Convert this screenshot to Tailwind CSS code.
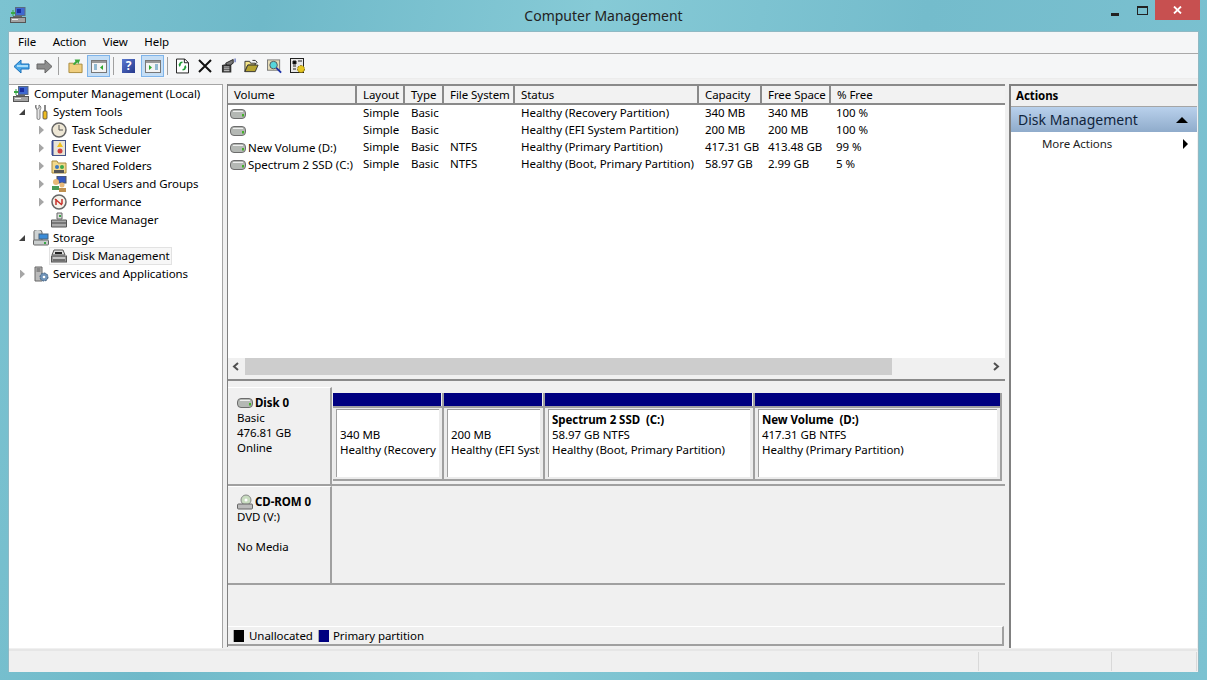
<!DOCTYPE html>
<html lang="en">
<head>
<meta charset="UTF-8" />
<title>Computer Management</title>
<script src="https://cdn.jsdelivr.net/npm/@tailwindcss/browser@4"></script>
</head>
<body class="w-[1207px] h-[680px] overflow-hidden flex flex-col bg-[linear-gradient(100deg,#7cc3d1_0%,#6fb9c9_20%,#86cad6_45%,#74bccc_70%,#7cc2d1_100%)] font-['Noto_Sans',sans-serif] text-[11.5px] tracking-[-0.06px] whitespace-nowrap text-black">

<svg class="hidden">
  <symbol id="pc" viewBox="0 0 16 16">
    <rect x="5.500" y=".5" width="9.500" height="8" fill="#3f68d0" stroke="#5a6a80"/><rect x="7" y="2" width="4" height="4" fill="#1a2fa0"/>
    <path d="M1 5h4v2H1z" fill="#39a845"/><path d="M3 3v6" stroke="#39a845"/><rect x=".5" y="10.500" width="15" height="5" fill="#a3a3a3" stroke="#555"/><path d="M3 9.500h9" stroke="#666"/><path d="M2 12.500h6" stroke="#eee"/>
  </symbol>
  <symbol id="hdd" viewBox="0 0 16 10">
    <rect x=".5" y=".5" width="15" height="9" rx="3.500" fill="#b4b8b4" stroke="#6c6c6c"/><path d="M3 2.500h10" stroke="#eee"/><rect x="12" y="5" width="2" height="2.500" fill="#44b029"/>
  </symbol>
  <symbol id="diskmgr" viewBox="0 0 16 16">
    <path d="M3 2h9l2 5H1z" fill="#ddd" stroke="#555"/><rect x="4" y="4" width="7" height="2" fill="#222"/><rect x=".5" y="8" width="15" height="6" fill="#9a9a9a" stroke="#555"/><path d="M2 10h12" stroke="#eee"/><path d="M2 12h12" stroke="#444"/>
  </symbol>
</svg>

<!-- title bar -->
<header class="h-[31px] shrink-0 flex">
  <div class="w-[96px]"><svg class="w-4 h-4 ml-[10px] mt-[7px]"><use href="#pc"/></svg></div>
  <div class="flex-1 text-center text-[14px] tracking-normal leading-[31px] text-[#222]">Computer Management</div>
  <div class="w-[96px] flex items-start">
    <div class="w-[8px] h-[3px] mt-[13px] bg-[#222]"></div>
    <div class="w-[11px] h-[9px] ml-[18px] mt-[6px] border border-t-2 border-[#222]"></div>
    <div class="w-[45px] h-[20px] ml-[7px] bg-[#c75050] flex items-center justify-center">
      <svg width="9" height="8" viewBox="0 0 9 8"><path d="M1 .5l7 7M8 .5l-7 7" stroke="#fff" stroke-width="1.800"/></svg>
    </div>
  </div>
</header>

<!-- window -->
<div class="mx-[8px] mb-[8px] flex-1 flex flex-col bg-[#f0f0f0] border-t border-r border-l border-[#8fb9c4] w-[1191px] min-h-0">
  <nav class="h-[22px] bg-[#f5f6f7] flex items-center pl-[9px] pb-[2px] gap-[16.5px] border-b border-[#a9a9a9]">
    <span>File</span><span>Action</span><span>View</span><span>Help</span>
  </nav>

  <!-- toolbar -->
  <div class="h-[24px] bg-[#f5f6f7] flex items-center pl-[4px]">
    <svg class="w-[17px] h-[15px]" viewBox="0 0 17 15"><path d="M8 1L1 7.500 8 14v-4h8V5H8z" fill="#4aa8e8" stroke="#1b6fb8"/><path d="M4 7h11" stroke="#a7dcfa" stroke-width="2"/></svg>
    <svg class="w-[17px] h-[15px] ml-[6px]" viewBox="0 0 17 15"><path d="M9 1l7 6.500L9 14v-4H1V5h8z" fill="#8d8d8d" stroke="#666"/></svg>
    <div class="w-px h-[18px] bg-[#a0a0a0] ml-[5px] mr-[9px]"></div>
    <svg class="w-[15px] h-[16px]" viewBox="0 0 16 16"><path d="M1 5h5l1 1h8v9H1z" fill="#f0ce7e" stroke="#a88a3a"/><path d="M5 6l3-3-1-2 6 0-2 5-1-2-3 3z" fill="#3da83d"/></svg>
    <div class="w-[23px] h-[22px] ml-[4px] bg-[#c5def5] border border-[#7eb4ea] flex items-center justify-center">
      <svg class="w-[16px] h-[13px]" viewBox="0 0 16 13"><rect x=".5" y=".5" width="15" height="12" fill="#f4f4f4" stroke="#777"/><rect x="1" y="1" width="14" height="2" fill="#999"/><path d="M3 5h3M3 7h3M3 9h3" stroke="#2f7fb0"/><path d="M12 5v5L9 7.500z" fill="#2da82d"/></svg>
    </div>
    <div class="w-px h-[18px] bg-[#a0a0a0] ml-[3px] mr-[8px]"></div>
    <div class="w-[13px] h-[14px] bg-[linear-gradient(135deg,#5a78d0,#26398c)] text-white font-bold text-[12px] leading-[14px] text-center">?</div>
    <div class="w-[23px] h-[22px] ml-[6px] bg-[#c5def5] border border-[#7eb4ea] flex items-center justify-center">
      <svg class="w-[16px] h-[13px]" viewBox="0 0 16 13"><rect x=".5" y=".5" width="15" height="12" fill="#f4f4f4" stroke="#777"/><rect x="1" y="1" width="14" height="2" fill="#999"/><path d="M10 5h3M10 7h3M10 9h3" stroke="#2f7fb0"/><path d="M4 5v5l3-2.500z" fill="#2da82d"/></svg>
    </div>
    <div class="w-px h-[18px] bg-[#a0a0a0] ml-[3px] mr-[8px]"></div>
    <svg class="w-[13px] h-[16px]" viewBox="0 0 14 16"><path d="M.5.5h9l4 4v11H.5z" fill="#fff" stroke="#111"/><path d="M9 .5v4h4" fill="none" stroke="#111"/><path d="M7 4a3 3 0 0 0-3 3M7 12a3 3 0 0 0 3-3" fill="none" stroke="#1c9c34" stroke-width="1.600"/><path d="M2.500 6.500h3L4 9zM8.500 9.500h3L10 7z" fill="#1c9c34"/></svg>
    <svg class="w-[14px] h-[14px] ml-[9px]" viewBox="0 0 14 14"><path d="M1 1l12 12M13 1L1 13" stroke="#111" stroke-width="2"/></svg>
    <svg class="w-[15px] h-[16px] ml-[9px]" viewBox="0 0 16 16"><path d="M1 7l8-2h2v10H1z" fill="#333"/><path d="M3 9h6M3 11h6M3 13h6" stroke="#ddd"/><path d="M5 5l8-4v4l-3 2H6z" fill="#777" stroke="#222"/><path d="M15 0v4" stroke="#2a3fa8"/></svg>
    <svg class="w-[15px] h-[14px] ml-[8px]" viewBox="0 0 16 14"><path d="M1 2h5l1 2h5v2H4L1 13z" fill="#f5e58a" stroke="#333"/><path d="M4 6h11l-3 7H1z" fill="#b5a330" stroke="#333"/><path d="M9 1h3l2 2-2 2" fill="none" stroke="#222"/></svg>
    <svg class="w-[15px] h-[16px] ml-[8px]" viewBox="0 0 16 16"><rect x=".5" y="1.500" width="13" height="11" fill="#e6dcb8" stroke="#777"/><circle cx="7" cy="7" r="4" fill="#55d6dc" stroke="#555"/><path d="M10 10l5 5" stroke="#1a2fa8" stroke-width="2"/></svg>
    <svg class="w-[16px] h-[16px] ml-[8px]" viewBox="0 0 16 16"><rect x=".5" y=".5" width="13" height="14" fill="#e8e8e8" stroke="#222"/><path d="M3 3h3v3H3zM8 3h4M3 8h3M3 11h3" stroke="#222"/><circle cx="11" cy="11" r="3.500" fill="#e6c620" stroke="#8a7410" stroke-dasharray="2 1"/></svg>
  </div>

  <!-- panes -->
  <div class="flex-1 flex min-h-0 pt-[5px] bg-[#f0f0f0] border-t border-[#ececec]">
    <!-- tree -->
    <aside class="w-[214px] h-[564px] bg-white border-r border-t border-[#a5a5a5]">
      <div class="h-[18px] flex items-center pl-[4px] gap-[5px]"><svg class="w-4 h-4"><use href="#pc"/></svg>Computer Management (Local)</div>
      <div class="h-[18px] flex items-center pl-[10px]">
        <span class="w-0 h-0 border-b-[6px] border-l-[6px] border-l-transparent border-b-[#404040]"></span>
        <svg class="w-[16px] h-[16px] ml-[8px]" viewBox="0 0 16 16"><path d="M3 1v3l1.500 1L6 4V1c2 1 2.500 3 1 5v8a1.500 1.500 0 0 1-3 0V6C2.500 4 2 2 3 1z" fill="#e4e4e4" stroke="#666" stroke-width=".8"/><rect x="11" y="1" width="2" height="6" fill="#888"/><rect x="10" y="7" width="4" height="8" rx="1" fill="#eebc22" stroke="#444" stroke-width=".8"/></svg>
        <span class="ml-[4px]">System Tools</span>
      </div>
      <div class="h-[18px] flex items-center pl-[30px]"><span class="w-[5px] h-[9px] bg-[#a6a6a6] [clip-path:polygon(0_0,100%_50%,0_100%)]"></span>
        <svg class="w-4 h-4 ml-[7px]" viewBox="0 0 16 16"><circle cx="8" cy="8" r="7" fill="#eee7d5" stroke="#666" stroke-width="1.500"/><path d="M8 3v5h4" fill="none" stroke="#555"/></svg><span class="ml-[5px]">Task Scheduler</span></div>
      <div class="h-[18px] flex items-center pl-[30px]"><span class="w-[5px] h-[9px] bg-[#a6a6a6] [clip-path:polygon(0_0,100%_50%,0_100%)]"></span>
        <svg class="w-4 h-4 ml-[7px]" viewBox="0 0 16 16"><rect x="1.500" y=".5" width="13" height="15" fill="#e9e4d6" stroke="#44548a"/><path d="M1.500 1v14" stroke="#3a4c9a" stroke-width="2"/><path d="M9 2l3 5H6z" fill="#f0c01c"/><circle cx="9" cy="11" r="2.500" fill="#d04040"/></svg><span class="ml-[5px]">Event Viewer</span></div>
      <div class="h-[18px] flex items-center pl-[30px]"><span class="w-[5px] h-[9px] bg-[#a6a6a6] [clip-path:polygon(0_0,100%_50%,0_100%)]"></span>
        <svg class="w-4 h-4 ml-[7px]" viewBox="0 0 16 16"><path d="M1 3h5l1 2h8v10H1z" fill="#f1d98c" stroke="#a88a3a"/><circle cx="6" cy="9" r="2" fill="#3b78c0"/><circle cx="11" cy="9" r="2" fill="#3ba84a"/><path d="M3 15v-3h5v3zM8 15v-3h5v3z" fill="#555"/></svg><span class="ml-[5px]">Shared Folders</span></div>
      <div class="h-[18px] flex items-center pl-[30px]"><span class="w-[5px] h-[9px] bg-[#a6a6a6] [clip-path:polygon(0_0,100%_50%,0_100%)]"></span>
        <svg class="w-4 h-4 ml-[7px]" viewBox="0 0 16 16"><rect x="6" y="0" width="9" height="7" fill="#3558c0" stroke="#555"/><circle cx="5" cy="6" r="3" fill="#e8b878"/><path d="M1 14v-4h7v4z" fill="#4a9a58"/><circle cx="11" cy="9" r="2.500" fill="#e8b878"/><path d="M8 16v-4h7v4z" fill="#c09050"/></svg><span class="ml-[5px]">Local Users and Groups</span></div>
      <div class="h-[18px] flex items-center pl-[30px]"><span class="w-[5px] h-[9px] bg-[#a6a6a6] [clip-path:polygon(0_0,100%_50%,0_100%)]"></span>
        <svg class="w-4 h-4 ml-[7px]" viewBox="0 0 16 16"><circle cx="8" cy="8" r="7" fill="#f5f2ea" stroke="#666" stroke-width="1.500"/><path d="M4 5l7 6M5 11V5M11 5v5" fill="none" stroke="#c8302a" stroke-width="1.500"/></svg><span class="ml-[5px]">Performance</span></div>
      <div class="h-[18px] flex items-center pl-[42px]">
        <svg class="w-4 h-4" viewBox="0 0 16 16"><path d="M6 1h5v6H6z" fill="#ddd" stroke="#666"/><rect x="8" y="3" width="2" height="2" fill="#39a845"/><path d="M.5 8h15v7H.5z" fill="#aaa" stroke="#555"/><path d="M1 11h14" stroke="#444"/></svg><span class="ml-[5px]">Device Manager</span></div>
      <div class="h-[18px] flex items-center pl-[10px]">
        <span class="w-0 h-0 border-b-[6px] border-l-[6px] border-l-transparent border-b-[#404040]"></span>
        <svg class="w-[16px] h-[16px] ml-[8px]" viewBox="0 0 16 16"><path d="M1 3a4 3 0 0 1 8-1v10H1z" fill="#cfd3d3" stroke="#666"/><rect x="6" y="4" width="9" height="5" fill="#3b8cd8" stroke="#46627e"/><rect x=".5" y="10" width="15" height="5" rx="1" fill="#c9cdcd" stroke="#666"/><rect x="11" y="12" width="2" height="2" fill="#39a845"/></svg>
        <span class="ml-[4px]">Storage</span>
      </div>
      <div class="h-[18px] flex items-center pl-[40px]">
        <div class="flex items-center h-[18px] pl-[1px] pr-[1px] bg-[#f7f7f7] border border-[#e2e2e2]"><svg class="w-4 h-4"><use href="#diskmgr"/></svg><span class="ml-[5px]">Disk Management</span></div>
      </div>
      <div class="h-[18px] flex items-center pl-[11px]"><span class="w-[5px] h-[9px] bg-[#a6a6a6] [clip-path:polygon(0_0,100%_50%,0_100%)]"></span>
        <svg class="w-4 h-4 ml-[8px]" viewBox="0 0 16 16"><path d="M2 1h7v14H2z" fill="#bbb" stroke="#666"/><path d="M3.500 3h4M3.500 5h4" stroke="#555"/><circle cx="11" cy="11" r="4" fill="#6f93b8" stroke="#44607e" stroke-dasharray="2 1"/><circle cx="11" cy="11" r="1.300" fill="#fff"/></svg><span class="ml-[4px]">Services and Applications</span></div>
    </aside>

    <!-- center -->
    <main class="w-[778px] h-[563px] ml-[4px] border-l border-[#808080] flex flex-col">
      <section class="bg-white h-[295px] border-t-2 border-[#8a8a8a] flex flex-col">
        <div class="grid grid-cols-[129px_48px_39px_71px_184px_63px_69px_1fr] h-[19px] border-b-2 border-[#8a8a8a] bg-[#f2f2f2] leading-[17px]">
          <div class="pl-[6px] border-r-2 border-[#8a8a8a]">Volume</div>
          <div class="pl-[6px] border-r-2 border-[#8a8a8a]">Layout</div>
          <div class="pl-[6px] border-r-2 border-[#8a8a8a]">Type</div>
          <div class="pl-[6px] border-r-2 border-[#8a8a8a]">File System</div>
          <div class="pl-[6px] border-r-2 border-[#8a8a8a]">Status</div>
          <div class="pl-[6px] border-r-2 border-[#8a8a8a]">Capacity</div>
          <div class="pl-[6px] border-r-2 border-[#8a8a8a]">Free Space</div>
          <div class="pl-[6px]">% Free</div>
        </div>
        <div class="flex-1 leading-[15px]">
          <div class="grid grid-cols-[129px_48px_39px_71px_184px_63px_69px_1fr] h-[17px]">
            <div class="pl-[2px] flex items-center"><svg class="w-4 h-[10px]"><use href="#hdd"/></svg></div><div class="pl-[6px]">Simple</div><div class="pl-[6px]">Basic</div><div class="pl-[6px]"></div><div class="pl-[6px]">Healthy (Recovery Partition)</div><div class="pl-[6px]">340 MB</div><div class="pl-[6px]">340 MB</div><div class="pl-[5px]">100 %</div>
          </div>
          <div class="grid grid-cols-[129px_48px_39px_71px_184px_63px_69px_1fr] h-[17px]">
            <div class="pl-[2px] flex items-center"><svg class="w-4 h-[10px]"><use href="#hdd"/></svg></div><div class="pl-[6px]">Simple</div><div class="pl-[6px]">Basic</div><div class="pl-[6px]"></div><div class="pl-[6px]">Healthy (EFI System Partition)</div><div class="pl-[6px]">200 MB</div><div class="pl-[6px]">200 MB</div><div class="pl-[5px]">100 %</div>
          </div>
          <div class="grid grid-cols-[129px_48px_39px_71px_184px_63px_69px_1fr] h-[17px]">
            <div class="pl-[2px] flex items-center gap-[2px] leading-[15px]"><svg class="w-4 h-[10px]"><use href="#hdd"/></svg>New Volume (D:)</div><div class="pl-[6px]">Simple</div><div class="pl-[6px]">Basic</div><div class="pl-[6px]">NTFS</div><div class="pl-[6px]">Healthy (Primary Partition)</div><div class="pl-[6px]">417.31 GB</div><div class="pl-[6px]">413.48 GB</div><div class="pl-[5px]">99 %</div>
          </div>
          <div class="grid grid-cols-[129px_48px_39px_71px_184px_63px_69px_1fr] h-[17px]">
            <div class="pl-[2px] flex items-center gap-[2px] leading-[15px]"><svg class="w-4 h-[10px]"><use href="#hdd"/></svg>Spectrum 2 SSD (C:)</div><div class="pl-[6px]">Simple</div><div class="pl-[6px]">Basic</div><div class="pl-[6px]">NTFS</div><div class="pl-[6px]">Healthy (Boot, Primary Partition)</div><div class="pl-[6px]">58.97 GB</div><div class="pl-[6px]">2.99 GB</div><div class="pl-[5px]">5 %</div>
          </div>
        </div>
        <div class="h-[21px] pb-[4px] flex items-center bg-[#f0f0f0]">
          <svg class="w-[17px] h-[17px] shrink-0" viewBox="0 0 17 17"><path d="M10 5L6 8.500 10 12" fill="none" stroke="#505050" stroke-width="2"/></svg>
          <div class="w-[647px] h-full bg-[#cdcdcd]"></div>
          <div class="flex-1"></div>
          <svg class="w-[17px] h-[17px] shrink-0 mr-[1px]" viewBox="0 0 17 17"><path d="M7 5l4 3.500L7 12" fill="none" stroke="#505050" stroke-width="2"/></svg>
        </div>
      </section>
      <div class="h-[2px] bg-[#8a8a8a]"></div>
      <section class="flex-1 flex flex-col bg-[#f0f0f0] min-h-0 pt-[6px] leading-[15px]">
        <div class="flex h-[99px] border-b-2 border-[#a0a0a0]">
          <div class="w-[104px] h-full border-r-2 border-[#a0a0a0] border-t border-t-white pl-[9px] pt-[7px]">
            <div class="flex items-center font-bold h-[15px]"><svg class="w-4 h-[10px] mr-[2px]"><use href="#hdd"/></svg>Disk 0</div>
            <div>Basic</div><div>476.81 GB</div><div>Online</div>
          </div>
          <div class="flex-1 flex pl-[1px] pr-[3px] pt-[6px]">
            <div class="w-[111px] h-[88px] border-r-2 border-[#a0a0a0] flex flex-col">
              <div class="h-[13px] bg-[#000080] mr-[1px]"></div>
              <div class="flex-1 border-t-2 border-b-2 border-[#a0a0a0] pl-[3px] pr-[3px] pt-[1px] pb-[2px] bg-[#ececec]"><div class="h-full border-t border-l border-[#a0a0a0] bg-white pl-[3px] pt-[17px] overflow-hidden"><div>340 MB</div><div>Healthy (Recovery Partition)</div></div></div>
            </div>
            <div class="w-[101px] h-[88px] border-r-2 border-[#a0a0a0] flex flex-col">
              <div class="h-[13px] bg-[#000080] mr-[1px]"></div>
              <div class="flex-1 border-t-2 border-b-2 border-[#a0a0a0] pl-[3px] pr-[3px] pt-[1px] pb-[2px] bg-[#ececec]"><div class="h-full border-t border-l border-[#a0a0a0] bg-white pl-[3px] pt-[17px] overflow-hidden"><div>200 MB</div><div>Healthy (EFI System Partition)</div></div></div>
            </div>
            <div class="w-[210px] h-[88px] border-r-2 border-[#a0a0a0] flex flex-col">
              <div class="h-[13px] bg-[#000080] mr-[1px]"></div>
              <div class="flex-1 border-t-2 border-b-2 border-[#a0a0a0] pl-[3px] pr-[3px] pt-[1px] pb-[2px] bg-[#ececec]"><div class="h-full border-t border-l border-[#a0a0a0] bg-white pl-[3px] pt-[2px] overflow-hidden"><div class="font-bold">Spectrum 2 SSD&nbsp; (C:)</div><div>58.97 GB NTFS</div><div>Healthy (Boot, Primary Partition)</div></div></div>
            </div>
            <div class="flex-1 h-[88px] border-r-2 border-[#a0a0a0] flex flex-col">
              <div class="h-[13px] bg-[#000080]"></div>
              <div class="flex-1 border-t-2 border-b-2 border-[#a0a0a0] pl-[3px] pr-[3px] pt-[1px] pb-[2px] bg-[#ececec]"><div class="h-full border-t border-l border-[#a0a0a0] bg-white pl-[3px] pt-[2px] overflow-hidden"><div class="font-bold">New Volume&nbsp; (D:)</div><div>417.31 GB NTFS</div><div>Healthy (Primary Partition)</div></div></div>
            </div>
          </div>
        </div>
        <div class="flex h-[99px] border-b-2 border-[#a0a0a0]">
          <div class="w-[104px] h-full border-r-2 border-[#a0a0a0] border-t border-t-white pl-[9px] pt-[7px]">
            <div class="flex items-center font-bold h-[15px]"><svg class="w-4 h-4 mr-[2px]" viewBox="0 0 16 16"><circle cx="9" cy="6" r="5" fill="#c8dcc0" stroke="#888"/><circle cx="9" cy="6" r="1.500" fill="#fff"/><rect x=".5" y="10" width="15" height="5" rx="1" fill="#bbb" stroke="#666"/></svg>CD-ROM 0</div>
            <div>DVD (V:)</div><div>&nbsp;</div><div>No Media</div>
          </div>
        </div>
        <div class="flex-1"></div>
        <div class="h-[20px] flex items-center pl-[5px] border-t border-white border-r-2 border-b-2 border-r-[#a0a0a0] border-b-[#a0a0a0] mr-[1px] mb-[1px]">
          <span class="w-[11px] h-[12px] bg-black border-l border-[#aaa]"></span><span class="ml-[5px]">Unallocated</span>
          <span class="w-[11px] h-[12px] bg-[#000080] border-l border-[#aaa] ml-[5px]"></span><span class="ml-[4px]">Primary partition</span>
        </div>
      </section>
    </main>

    <!-- actions -->
    <aside class="w-[188px] h-[564px] ml-[4px] bg-white border-l-2 border-t-2 border-[#808080]">
      <div class="h-[21px] bg-[#f0f0f0] border-b border-[#a5a5a5] pl-[5px] pt-[1px] font-bold">Actions</div>
      <div class="h-[25px] bg-[linear-gradient(#b9d1ec,#8fabcb)] flex items-center justify-between pl-[7px] pr-[9px]"><span class="text-[14px] tracking-normal text-[#10243c]">Disk Management</span><span class="w-0 h-0 border-x-[6px] border-x-transparent border-b-[6px] border-b-black"></span></div>
      <div class="h-[24px] flex items-center justify-between pl-[31px] pr-[9px] text-[#222]"><span>More Actions</span><span class="w-0 h-0 border-y-[5px] border-y-transparent border-l-[5px] border-l-black"></span></div>
    </aside>
  </div>

  <!-- status bar -->
  <footer class="h-[23px] bg-[#f0f0f0] border-t-2 border-[#e6e6e6] flex">
    <div class="w-[970px] border-r border-[#d9d9d9] my-[1px]"></div>
    <div class="w-[133px] border-r border-[#d9d9d9] my-[1px]"></div>
    <div class="w-[85px] border-r border-[#d9d9d9] my-[1px]"></div>
  </footer>
</div>
</body>
</html>
